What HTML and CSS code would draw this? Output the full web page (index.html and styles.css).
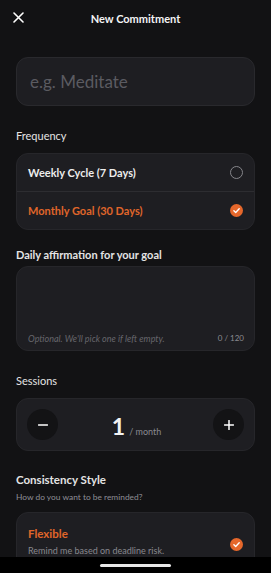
FILE: index.html
```html
<!DOCTYPE html>
<html lang="en">
<head>
  <meta charset="UTF-8">
  <meta name="viewport" content="width=device-width, initial-scale=1.0">
  <title>New Commitment</title>
  <link rel="stylesheet" href="styles.css">
</head>
<body>
  <div class="screen">
    <div class="header">
      <span class="close">
        <svg width="11" height="11" viewBox="0 0 11 11"><path d="M1 1L10 10M10 1L1 10" stroke="#fff" stroke-width="1.6" stroke-linecap="round"/></svg>
      </span>
      <span class="title">New Commitment</span>
    </div>

    <div class="nameInput">e.g. Meditate</div>

    <div class="label">Frequency</div>
    <div class="card options">
      <div class="option">
        <span>Weekly Cycle (7 Days)</span>
        <span class="radio"></span>
      </div>
      <div class="option active">
        <span>Monthly Goal (30 Days)</span>
        <span class="check">
          <svg width="13" height="13" viewBox="0 0 13 13"><circle cx="6.5" cy="6.5" r="6.5" fill="#e5672b"/><path d="M3.9 6.7L5.7 8.4L9.2 4.8" stroke="#fff" stroke-width="1.4" fill="none" stroke-linecap="round" stroke-linejoin="round"/></svg>
        </span>
      </div>
    </div>

    <div class="label affLabel">Daily affirmation for your goal</div>
    <div class="card affirmation">
      <span class="hint">Optional. We'll pick one if left empty.</span>
      <span class="count">0 / 120</span>
    </div>

    <div class="label">Sessions</div>
    <div class="card stepper">
      <span class="round">
        <svg width="10" height="2" viewBox="0 0 10 2"><path d="M0.5 1H9.5" stroke="#fff" stroke-width="1.5" stroke-linecap="round"/></svg>
      </span>
      <span class="value"><b>1</b><small>/ month</small></span>
      <span class="round">
        <svg width="10" height="10" viewBox="0 0 10 10"><path d="M0.5 5H9.5M5 0.5V9.5" stroke="#fff" stroke-width="1.5" stroke-linecap="round"/></svg>
      </span>
    </div>

    <div class="label big">Consistency Style</div>
    <div class="sub">How do you want to be reminded?</div>
    <div class="card style">
      <div class="styleText">
        <div class="styleName">Flexible</div>
        <div class="styleDesc">Remind me based on deadline risk.</div>
      </div>
      <span class="check">
        <svg width="13" height="13" viewBox="0 0 13 13"><circle cx="6.5" cy="6.5" r="6.5" fill="#e5672b"/><path d="M3.9 6.7L5.7 8.4L9.2 4.8" stroke="#fff" stroke-width="1.4" fill="none" stroke-linecap="round" stroke-linejoin="round"/></svg>
      </span>
    </div>
  </div>
  <div class="homeBar"><span></span></div>
</body>
</html>
```

FILE: styles.css
```css
body {
    margin: 0;
    background: #121214;
    font-family: Lato, "Noto Sans", sans-serif;
    color: #ececec;
    overflow: hidden;
    height: 573px;
}
.screen {
    padding: 0 16px;
}
.header {
    height: 36px;
    display: flex;
    align-items: center;
    justify-content: center;
    position: relative;
}
.close {
    position: absolute;
    left: -3px;
    top: 12px;
    width: 11px;
    height: 11px;
    display: flex;
}
.title {
    font-size: 11px;
    font-weight: 700;
    color: #f4f4f4;
}
.nameInput {
    margin-top: 21px;
    height: 49px;
    box-sizing: border-box;
    background: #1e1e22;
    border: 1px solid #29292d;
    border-radius: 12px;
    padding-left: 13px;
    display: flex;
    align-items: center;
    font-size: 17px;
    color: #5b5b61;
}
.label {
    margin-top: 23px;
    font-size: 11px;
    line-height: 14px;
    color: #e4e4e4;
}
.card {
    background: #1e1e22;
    border: 1px solid #26262a;
    border-radius: 12px;
    box-sizing: border-box;
}
.options {
    margin-top: 10px;
}
.option {
    height: 37px;
    display: flex;
    align-items: center;
    justify-content: space-between;
    padding: 0 11px;
    font-size: 11px;
    font-weight: 700;
    color: #ededed;
}
.option + .option {
    border-top: 1px solid #2d2d31;
}
.option.active {
    color: #e0662a;
}
.radio {
    width: 13px;
    height: 13px;
    box-sizing: border-box;
    border: 1.3px solid #86868b;
    border-radius: 50%;
}
.check {
    display: flex;
    width: 13px;
    height: 13px;
}
.affLabel {
    margin-top: 17px;
    font-size: 11px;
    font-weight: 700;
    line-height: 15px;
}
.affirmation {
    margin-top: 4px;
    height: 85px;
    display: flex;
    align-items: flex-end;
    justify-content: space-between;
    padding: 0 10px 6px 11px;
}
.hint {
    font-size: 9px;
    font-style: italic;
    color: #66666c;
}
.count {
    font-size: 8px;
    color: #8c8c92;
    margin-bottom: 1px;
}
.stepper {
    margin-top: 10px;
    height: 53px;
    display: flex;
    align-items: center;
    justify-content: space-between;
    padding: 0 10px;
}
.round {
    width: 31px;
    height: 31px;
    border-radius: 50%;
    background: #131315;
    display: flex;
    align-items: center;
    justify-content: center;
}
.value {
    display: flex;
    align-items: baseline;
    gap: 4px;
    margin-top: 2px;
    margin-left: 2px;
}
.value b {
    font-size: 23px;
    color: #f2f2f2;
}
.value small {
    font-size: 9px;
    color: #8a8a90;
}
.big {
    margin-top: 21px;
    font-size: 11.5px;
    font-weight: 700;
    line-height: 15px;
}
.sub {
    margin-top: 5px;
    font-size: 8.4px;
    color: #8e8e94;
}
.style {
    margin-top: 10px;
    height: 70px;
    display: flex;
    justify-content: space-between;
    align-items: flex-start;
    padding: 13px 11px 0 11px;
}
.styleName {
    font-size: 11.5px;
    font-weight: 700;
    color: #e0662a;
    margin-top: 1px;
}
.styleDesc {
    margin-top: 5px;
    font-size: 9px;
    color: #88888e;
}
.style .check {
    margin-top: 12px;
}
.homeBar {
    position: fixed;
    left: 0;
    right: 0;
    bottom: 0;
    height: 16px;
    background: #000;
    display: flex;
    justify-content: center;
    padding-top: 7px;
    box-sizing: border-box;
}
.homeBar span {
    width: 71px;
    height: 3px;
    border-radius: 2px;
    background: #e8e8e8;
}
```
